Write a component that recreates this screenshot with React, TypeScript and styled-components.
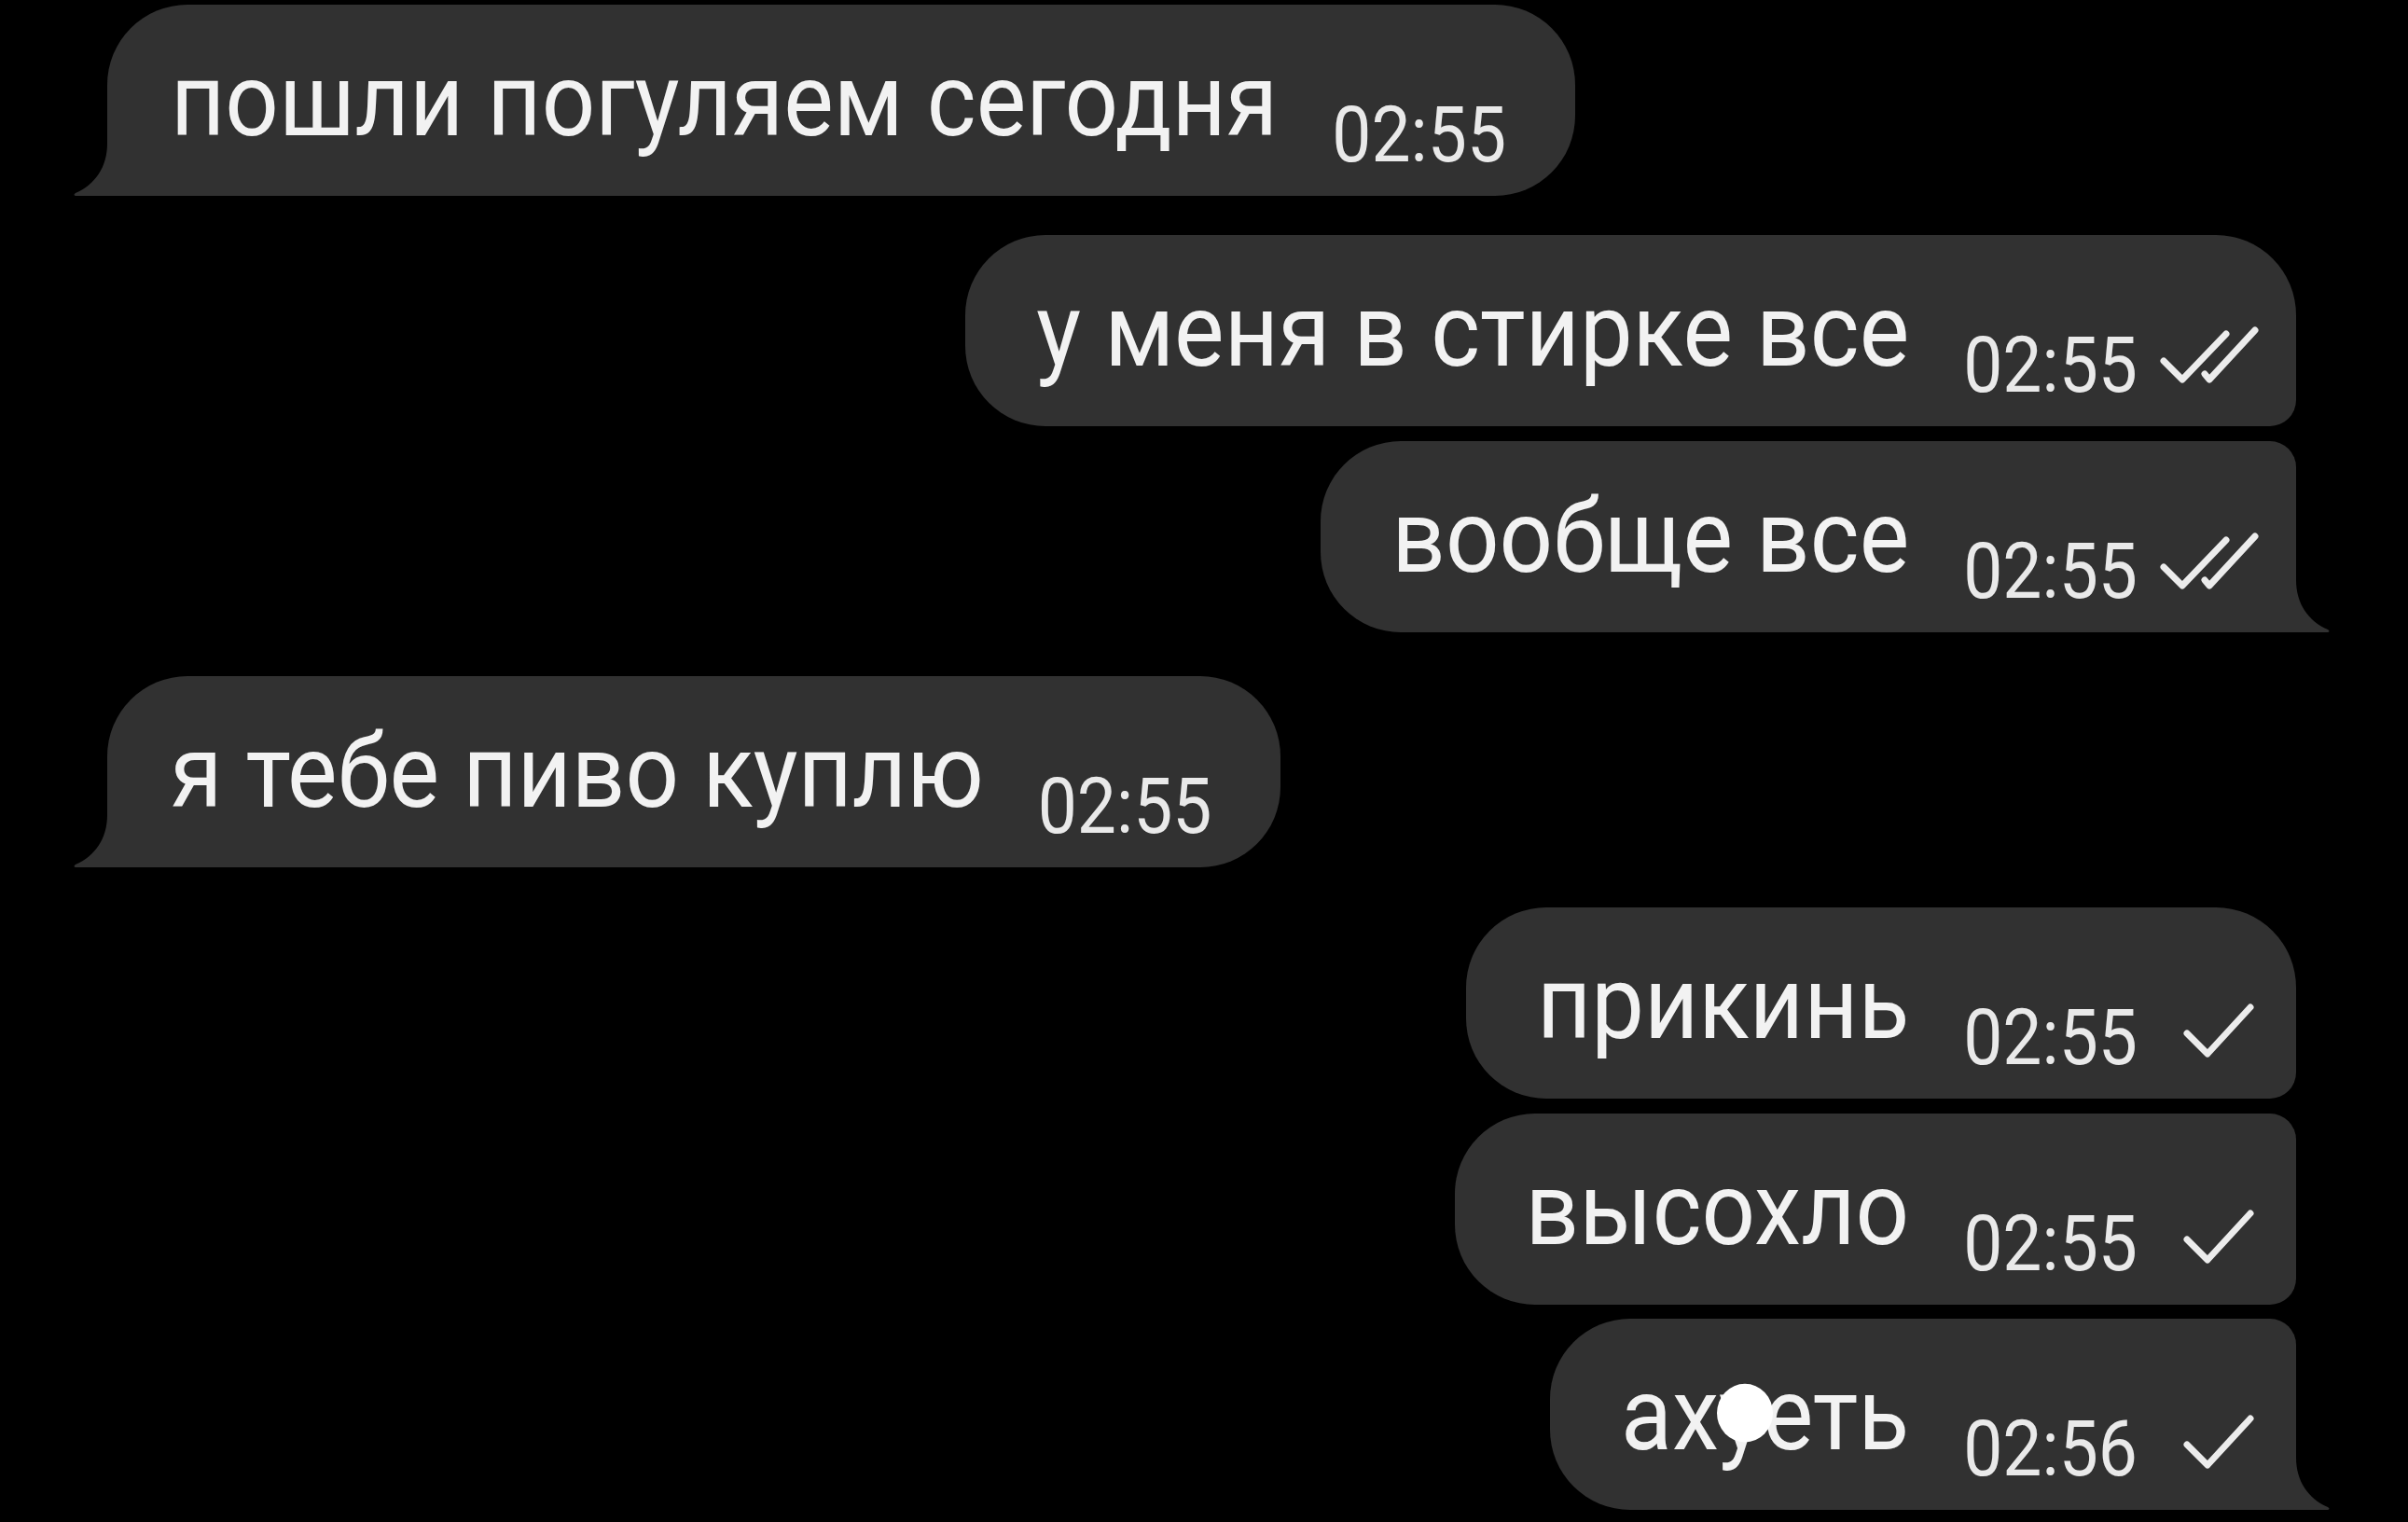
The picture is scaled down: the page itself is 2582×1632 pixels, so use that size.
import React from 'react';
import styled, { createGlobalStyle } from 'styled-components';

const BIG = 86;
const SMALL = 28;

const GlobalStyle = createGlobalStyle`
  html, body {
    margin: 0;
    padding: 0;
    background: #000;
  }
  body {
    width: 2582px;
    height: 1632px;
    overflow: hidden;
    font-family: Roboto, "Noto Sans", "Liberation Sans", sans-serif;
  }
`;

const Chat = styled.div`
  display: flex;
  flex-direction: column;
  padding: 5px 120px 0 115px;
`;

const Row = styled.div<{ $out: boolean; $gap: number }>`
  display: flex;
  justify-content: ${(p) => (p.$out ? 'flex-end' : 'flex-start')};
  margin-top: ${(p) => p.$gap}px;
`;

const Bubble = styled.div<{ $out: boolean; $first: boolean; $last: boolean }>`
  position: relative;
  box-sizing: border-box;
  height: 205px;
  padding: 55px ${(p) => (p.$out ? '38px 0 76px' : '74px 0 68px')};
  background: #313131;
  color: #f2f2f2;
  font-size: 101px;
  line-height: 1;
  white-space: nowrap;
  border-radius: ${(p) =>
    p.$out
      ? `${BIG}px ${p.$first ? BIG : SMALL}px ${p.$last ? 0 : SMALL}px ${BIG}px`
      : `${p.$first ? BIG : SMALL}px ${BIG}px ${BIG}px ${p.$last ? 0 : SMALL}px`};
`;

// the screenshot is a little stretched vertically, so the glyphs are too
const Text = styled.span`
  display: inline-block;
  transform: scaleY(1.08);
  transform-origin: 0 85px;
`;

const Tail = styled.svg<{ $out: boolean }>`
  position: absolute;
  bottom: 0;
  width: 38px;
  height: 56px;
  ${(p) => (p.$out ? 'right: -37px;' : 'left: -37px; transform: scaleX(-1);')}
`;

const Meta = styled.span`
  display: inline-block;
  margin-left: 58px;
  vertical-align: -28px;
  font-size: 75px;
  line-height: 1;
  color: #e9e9e9;
`;

const Time = styled.span`
  display: inline-block;
  transform: scaleY(1.1);
  transform-origin: 0 63px;
`;

const Ticks = styled.svg`
  display: inline-block;
  width: 110px;
  height: 66px;
  margin-left: 22px;
  vertical-align: 6px;
`;

const Censored = styled.span`
  position: relative;
  display: inline-block;

  &::after {
    content: '';
    position: absolute;
    top: 20px;
    left: 50%;
    width: 60px;
    height: 58px;
    margin-left: -26px;
    border-radius: 50%;
    background: #fff;
  }
`;

const BubbleTail = ({ out }: { out: boolean }) => (
  <Tail $out={out} viewBox="0 0 38 56">
    <path d="M0 0 L1 0 C1 25 14 44 35 53 Q38 55 35 56 L0 56 Z" fill="#313131" />
  </Tail>
);

const Check = ({ read }: { read: boolean }) => (
  <Ticks viewBox="0 0 110 66">
    <g fill="none" stroke="#ececec" strokeWidth="7" strokeLinecap="round" strokeLinejoin="round">
      {read ? (
        <>
          <path d="M6 39 L26 59 L73 10" />
          <path d="M50 53 L55 59 L104 6" />
        </>
      ) : (
        <path d="M31 39 L53 61 L99 11" />
      )}
    </g>
  </Ticks>
);

interface Message {
  text: React.ReactNode;
  time: string;
  out: boolean;
  read?: boolean;
  first: boolean;
  last: boolean;
  gap: number;
}

const messages: Message[] = [
  { text: 'пошли погуляем сегодня', time: '02:55', out: false, first: true, last: true, gap: 0 },
  { text: 'у меня в стирке все', time: '02:55', out: true, read: true, first: true, last: false, gap: 42 },
  { text: 'вообще все', time: '02:55', out: true, read: true, first: false, last: true, gap: 16 },
  { text: 'я тебе пиво куплю', time: '02:55', out: false, first: true, last: true, gap: 47 },
  { text: 'прикинь', time: '02:55', out: true, read: false, first: true, last: false, gap: 43 },
  { text: 'высохло', time: '02:55', out: true, read: false, first: false, last: false, gap: 16 },
  {
    text: (
      <>
        ах<Censored>у</Censored>еть
      </>
    ),
    time: '02:56',
    out: true,
    read: false,
    first: false,
    last: true,
    gap: 15,
  },
];

const App = () => (
  <>
    <GlobalStyle />
    <Chat>
      {messages.map((m, i) => (
        <Row $out={m.out} $gap={m.gap} key={i}>
          <Bubble $out={m.out} $first={m.first} $last={m.last}>
            <Text>{m.text}</Text>
            <Meta>
              <Time>{m.time}</Time>
              {m.out && <Check read={!!m.read} />}
            </Meta>
            {m.last && <BubbleTail out={m.out} />}
          </Bubble>
        </Row>
      ))}
    </Chat>
  </>
);

export default App;
